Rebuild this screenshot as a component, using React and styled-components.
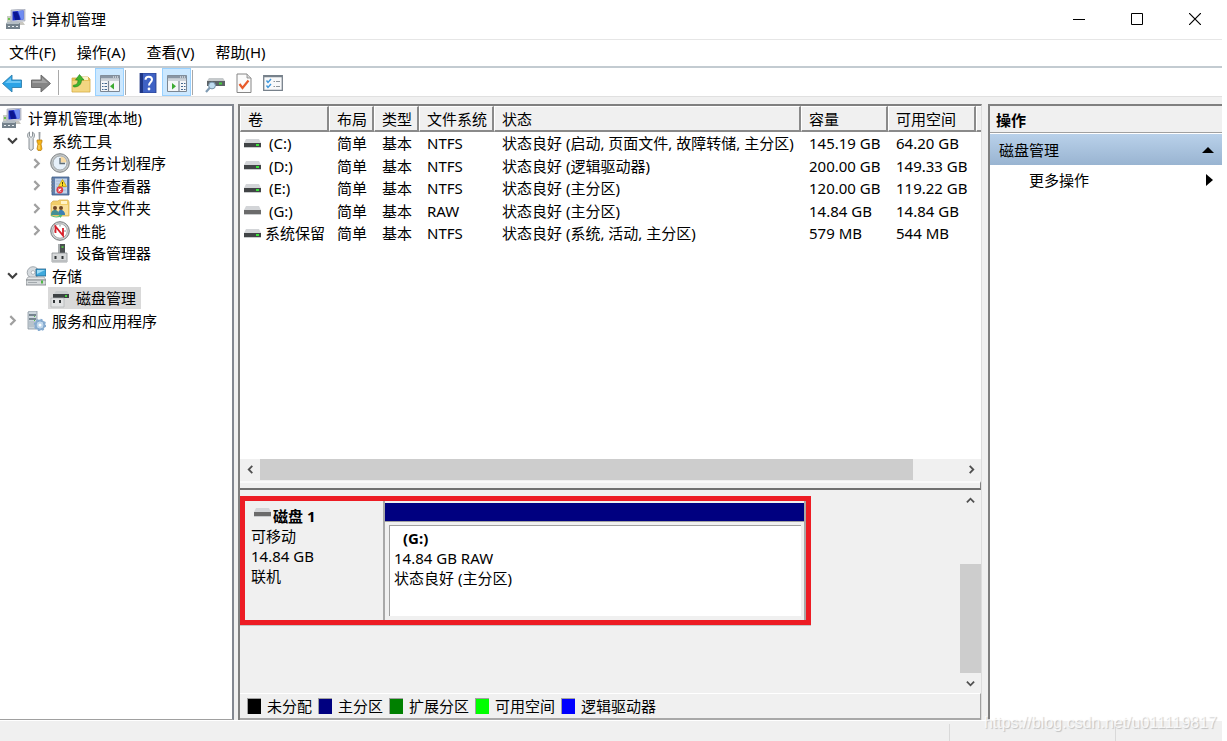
import { createGlobalStyle, styled } from "styled-components";

const menus = ["文件(F)", "操作(A)", "查看(V)", "帮助(H)"];

const tree = [
  { title: "计算机管理(本地)", icon: "computer", level: 0 },
  { title: "系统工具", icon: "tools", level: 1, arrow: "open" },
  { title: "任务计划程序", icon: "clock", level: 2, arrow: "closed" },
  { title: "事件查看器", icon: "events", level: 2, arrow: "closed" },
  { title: "共享文件夹", icon: "shared", level: 2, arrow: "closed" },
  { title: "性能", icon: "performance", level: 2, arrow: "closed" },
  { title: "设备管理器", icon: "device", level: 2 },
  { title: "存储", icon: "storage", level: 1, arrow: "open" },
  { title: "磁盘管理", icon: "disk", level: 2, selected: true },
  { title: "服务和应用程序", icon: "services", level: 1, arrow: "closed" },
];

const columns = [
  { title: "卷", width: 89 },
  { title: "布局", width: 45 },
  { title: "类型", width: 45 },
  { title: "文件系统", width: 75 },
  { title: "状态", width: 307 },
  { title: "容量", width: 87 },
  { title: "可用空间", width: 88 },
];

const volumes = [
  [" (C:)", "简单", "基本", "NTFS", "状态良好 (启动, 页面文件, 故障转储, 主分区)", "145.19 GB", "64.20 GB"],
  [" (D:)", "简单", "基本", "NTFS", "状态良好 (逻辑驱动器)", "200.00 GB", "149.33 GB"],
  [" (E:)", "简单", "基本", "NTFS", "状态良好 (主分区)", "120.00 GB", "119.22 GB"],
  [" (G:)", "简单", "基本", "RAW", "状态良好 (主分区)", "14.84 GB", "14.84 GB"],
  ["系统保留", "简单", "基本", "NTFS", "状态良好 (系统, 活动, 主分区)", "579 MB", "544 MB"],
];

const legends = [
  { title: "未分配", color: "#000" },
  { title: "主分区", color: "#000080" },
  { title: "扩展分区", color: "#008000" },
  { title: "可用空间", color: "#00ff00" },
  { title: "逻辑驱动器", color: "#0000ff" },
];

const icons = {
  computer: (
    <>
      <path d="M1 7h4v7H1z" fill="#c9cdc4" />
      <path d="M2 9h2v2H2z" fill="#6cc04a" />
      <path d="M5 1l14-1v12l-14 1z" fill="#c6cbd6" stroke="#9aa0ae" strokeWidth=".6" />
      <path d="M6.500 2.500l11-1v9l-11 1z" fill="#1c2fd0" />
      <path d="M12 2l5.500-.5v9l-2.500.2z" fill="#6f8cf2" />
      <path d="M7 3l4-.3 2 4 1 4-5 .4z" fill="#0a1690" />
      <path d="M13 13h4l2 3h-5z" fill="#c9c7c0" />
      <path d="M0 14h14v6H0z" fill="#75828c" />
      <path d="M1 13h13l-1 2H0z" fill="#b5bec4" />
      <path d="M2 17h2v1H2zM6 17h2v1H6zM10 17h2v1h-2z" fill="#e9eef0" />
    </>
  ),
  tools: (
    <>
      <path d="M3.500 1v4l1.500 1.500L6.500 5V1c2.500 1.500 2.500 4.500.7 6.500V18L5 19.500 3 18V7.500C1 6 1 2.500 3.500 1z" fill="#dfe2e4" stroke="#7f878c" strokeWidth=".9" />
      <path d="M12.500 1h2l-.3 8h-1.400z" fill="#9ba0a3" />
      <path d="M11 9h5v2l-1 2 1 5-1 1.500h-3L11 18l1-5-1-2z" fill="#f4b41a" stroke="#b87a08" strokeWidth=".7" />
      <path d="M13 14v4" stroke="#ffe38a" strokeWidth="1" />
    </>
  ),
  clock: (
    <>
      <circle cx="10" cy="10" r="9.300" fill="#c5c8c9" stroke="#7d8285" strokeWidth="1" />
      <circle cx="10" cy="10" r="7" fill="#e6f0fa" stroke="#92999d" strokeWidth=".8" />
      <path d="M10.500 9.500V3.500c3.500.3 5.700 2.500 6 6z" fill="#f7d9a2" />
      <path d="M10 5v5.500h5" fill="none" stroke="#5f6d78" strokeWidth="1.300" />
    </>
  ),
  events: (
    <>
      <path d="M2 1h17v18H2z" fill="#5f7fae" stroke="#3e5a87" strokeWidth=".8" />
      <path d="M5 2.500h12v15H5z" fill="#c3d4ea" />
      <path d="M6 5h10M6 8h10M6 11h10M6 14h10" stroke="#9cb2d2" strokeWidth=".8" />
      <path d="M1 3h3M1 6h3M1 9h3M1 12h3M1 15h3" stroke="#7a8591" strokeWidth="1" />
      <path d="M12.500 3.500l4 7h-8z" fill="#ffdf2b" stroke="#c29b00" strokeWidth=".7" />
      <path d="M12.500 6v2.500M12.500 9.200v.8" stroke="#4a3b00" strokeWidth="1" />
      <circle cx="9.800" cy="14" r="3.400" fill="#e13b44" />
      <path d="M8.500 12.700l2.600 2.600M11.100 12.700l-2.600 2.600" stroke="#fff" strokeWidth="1.100" />
    </>
  ),
  shared: (
    <>
      <path d="M1 5l2-2h5l1-1h9l1 2v14H1z" fill="#f2ce69" stroke="#d9b55c" strokeWidth=".8" />
      <path d="M11 3h6v3h-6z" fill="#fff3c7" />
      <path d="M2 7h16v10H2z" fill="#fae09a" />
      <circle cx="5" cy="10" r="2" fill="#6d4626" />
      <circle cx="11" cy="10" r="2" fill="#6d4626" />
      <path d="M8 17c0-4 1-5 3-5s4 1.500 4 5z" fill="#3b7fb4" />
      <path d="M1 17c0-4 2-5 4-5s4 1.500 4 5z" fill="#458f92" />
      <path d="M1 16.500c2 2 5 2.500 8 1.500l-.5-1.500 4 .5-2 3-.5-1c-4 1-7 .5-9-1.500z" fill="#58c070" />
    </>
  ),
  performance: (
    <>
      <circle cx="10" cy="10" r="9.300" fill="#d0d2d3" stroke="#76797b" strokeWidth="1" />
      <circle cx="10" cy="10" r="7.200" fill="#fff" stroke="#8e9294" strokeWidth=".7" />
      <path d="M4 10h2M10 3.500v2M14 10h2" stroke="#6c7072" strokeWidth=".8" />
      <path d="M5.500 12V5.500l7.500 9V7" fill="none" stroke="#d81f2a" strokeWidth="1.800" />
    </>
  ),
  device: (
    <>
      <path d="M9 1h6v10H9z" fill="#4b4f51" />
      <path d="M8 1h2v10H8z" fill="#a9adaf" />
      <path d="M11.500 3h2v2h-2z" fill="#55b948" />
      <path d="M2 10h15v9H2z" fill="#d6d8d9" stroke="#8c9092" strokeWidth=".8" />
      <path d="M4.500 13h2v3h-2zM11.500 13h2v3h-2z" fill="#303437" />
      <path d="M2 17h15v2H2z" fill="#bbbec0" />
    </>
  ),
  storage: (
    <>
      <circle cx="7" cy="6.500" r="5.800" fill="#d6dbdf" stroke="#8f979d" strokeWidth=".8" />
      <circle cx="7" cy="6.500" r="1.800" fill="#fff" stroke="#8f979d" strokeWidth=".6" />
      <path d="M10 3h10v7H10z" fill="#3fa9dc" stroke="#245f88" strokeWidth=".8" />
      <path d="M11 4h8l-8 4z" fill="#9fdcf5" />
      <path d="M2 11h16l2 3H0z" fill="#e6e8e9" stroke="#8a8f93" strokeWidth=".6" />
      <path d="M0 14h20v5H0z" fill="#d6dadc" stroke="#73797d" strokeWidth=".8" />
      <path d="M15 14.500h2v3h-2z" fill="#50b846" />
      <path d="M2 16.500h9" stroke="#a3a9ad" strokeWidth="1" />
    </>
  ),
  disk: (
    <>
      <path d="M6 3h11l2 3H4z" fill="#c9cccd" />
      <path d="M3 6h16v4H3z" fill="#3d4143" />
      <path d="M15 7h2v2h-2z" fill="#45d13d" />
      <path d="M1 10h13v9H1z" fill="#e2e3e4" stroke="#b0b3b5" strokeWidth=".7" />
      <path d="M3 12h2v3H3zM9 12h2v3H9z" fill="#303437" />
    </>
  ),
  services: (
    <>
      <path d="M2 1l2-1h7v18H2z" fill="#cdd6dd" stroke="#8995a0" strokeWidth=".8" />
      <path d="M3 3h7v2H3zM3 7h7v2H3z" fill="#76848f" />
      <path d="M8 5.500h1M8 9.500h1" stroke="#52c04a" strokeWidth="1" />
      <path d="M3 11h7M3 13h7M3 15h7" stroke="#9ba8b3" strokeWidth=".8" />
      <circle cx="14" cy="14" r="4.300" fill="none" stroke="#86abd0" strokeWidth="2.200" />
      <circle cx="14" cy="14" r="5.500" fill="none" stroke="#86abd0" strokeWidth="1.500" strokeDasharray="2 2.300" />
      <circle cx="14" cy="14" r="3.200" fill="#bdd6ec" />
      <circle cx="14" cy="14" r="1.500" fill="#fff" />
    </>
  ),
  back: (
    <>
      <path d="M.5 10.500L10 2v5h9.500v7.500H10V19z" fill="#2ba3e6" stroke="#2f7fae" strokeWidth=".9" />
      <path d="M3 10l6-5.300V8h9.500v2z" fill="#6cc6f5" />
    </>
  ),
  forward: (
    <>
      <path d="M19.500 10.500L10 2v5H.5v7.500H10V19z" fill="#858585" stroke="#666" strokeWidth=".9" />
      <path d="M17 10l-6-5.300V8H1.500v2z" fill="#a3a3a3" />
    </>
  ),
  up: (
    <>
      <path d="M1 5h6l2-1h8l2 2v13H1z" fill="#e8c057" stroke="#d0a848" strokeWidth=".8" />
      <path d="M11 4h6v3h-6z" fill="#fdf3c9" />
      <path d="M1.500 8h17v10.500h-17z" fill="#f3d681" />
      <path d="M3 14c-.8 0-1-1-.5-2 3.500 0 4.500-2 4.500-5H4.500L8.500 1.500 13 7h-2.500c0 4.500-3 7-7.500 7z" fill="#3fb62e" stroke="#24801b" strokeWidth=".6" />
    </>
  ),
  panelLeft: (
    <>
      <path d="M.5 2.500h19v16H.5z" fill="#f4f6f8" stroke="#7b8692" strokeWidth="1" />
      <path d="M.5 2.500h19v3H.5z" fill="#8a96a4" />
      <path d="M13 4h1M15 4h1M17 4h1" stroke="#fff" strokeWidth="1" />
      <path d="M.5 7h19" stroke="#a5afba" strokeWidth="1" />
      <path d="M8.500 8v11" stroke="#7b8692" strokeWidth="1.200" />
      <path d="M2 10.500h1.500M4.500 10.500H7M2 13.500h1.500M4.500 13.500H7M2 16.500h1.500M4.500 16.500H7" stroke="#44688f" strokeWidth="1.200" />
      <path d="M14 10v6.500l-4-3.200z" fill="#3cab32" />
    </>
  ),
  help: (
    <>
      <path d="M2 0h16v20H2z" fill="#3f62c4" stroke="#243b87" strokeWidth=".8" />
      <path d="M2 0h3v20H2z" fill="#1f3786" />
      <path d="M7.500 6.800C7.500 2.500 14 2.800 14 6.500c0 2.800-3 2.800-3 6" fill="none" stroke="#fff" strokeWidth="2" />
      <circle cx="11" cy="16" r="1.400" fill="#fff" />
    </>
  ),
  panelRight: (
    <>
      <path d="M.5 2.500h19v16H.5z" fill="#f4f6f8" stroke="#7b8692" strokeWidth="1" />
      <path d="M.5 2.500h19v3H.5z" fill="#8a96a4" />
      <path d="M13 4h1M15 4h1M17 4h1" stroke="#fff" strokeWidth="1" />
      <path d="M.5 7h19" stroke="#a5afba" strokeWidth="1" />
      <path d="M12 8v11" stroke="#7b8692" strokeWidth="1.200" />
      <path d="M14 10.500h2M17 10.500h1.500M14 13.500h2M17 13.500h1.500M14 16.500h2M17 16.500h1.500" stroke="#44688f" strokeWidth="1.200" />
      <path d="M5 10v6.500l4-3.200z" fill="#3cab32" />
    </>
  ),
  inspect: (
    <>
      <path d="M4 5h14l2 3H2z" fill="#c6cacc" />
      <path d="M2 8h18v5H2z" fill="#5c6266" />
      <path d="M14 9.500h3v2h-3z" fill="#45d13d" />
      <path d="M5 14.500L1 19" stroke="#7f9bb3" strokeWidth="2.200" />
      <circle cx="7" cy="12.500" r="3.400" fill="#bfdcf0" stroke="#7590a5" strokeWidth="1" />
    </>
  ),
  check: (
    <>
      <path d="M3 1h10l4 4v14.500H3z" fill="#fbfbfb" stroke="#868686" strokeWidth="1" />
      <path d="M13 1v4h4" fill="#d9d9d9" stroke="#868686" strokeWidth=".8" />
      <path d="M5.500 11l3 4 6-7.500" fill="none" stroke="#e85a2a" strokeWidth="2.200" />
    </>
  ),
  list: (
    <>
      <path d="M.7 2.700h18.600v14.600H.7z" fill="#f8f9fa" stroke="#77818b" strokeWidth="1.300" />
      <path d="M1 3.500h18" stroke="#77818b" strokeWidth="1.500" />
      <path d="M3.500 7.500l1.500 2 3-3.500M3.500 12.500l1.500 2 3-3.500" fill="none" stroke="#3f97dc" strokeWidth="1.400" />
      <path d="M10.500 8.500H12M13 8.500h4M10.500 13.500H12M13 13.500h4" stroke="#8d959c" strokeWidth="1.200" />
    </>
  ),
};

const Icon = ({ name, size = 20 }) => (
  <StIcon viewBox="0 0 20 20" width={size} height={size} aria-hidden="true">
    {icons[name]}
  </StIcon>
);

const Drive = ({ off }) => (
  <StIcon viewBox="0 0 17 9" width="17" height="9" aria-hidden="true">
    <path d="M2 0h13l2 4H0z" fill="#d3d5d8" />
    <path d="M0 4h17v4H0z" fill={off ? "#6b6b6b" : "#414446"} />
    <path d="M0 8h17v1H0z" fill="#c9cbcd" />
    {!off && <path d="M12 5h3v2h-3z" fill="#3be03b" />}
  </StIcon>
);

const arrows = {
  left: "M7 1L3 5l4 4",
  right: "M3 1l4 4-4 4",
  up: "M1 7l4-4 4 4",
  down: "M1 3l4 4 4-4",
};

const Chevron = ({ to, size = 9, color = "#505050" }) => (
  <StIcon viewBox="0 0 10 10" width={size} height={size} aria-hidden="true">
    <path d={arrows[to]} fill="none" stroke={color} strokeWidth="2" />
  </StIcon>
);

const Tool = ({ name, label, active }) => (
  <ToolButton $active={active} aria-label={label}>
    <Icon name={name} />
  </ToolButton>
);

const TitleBar = () => (
  <StTitleBar>
    <Icon name="computer" />
    <h1>计算机管理</h1>
    <WindowButton aria-label="最小化">
      <svg width="12" height="12">
        <path d="M0 6.500h12" stroke="#000" />
      </svg>
    </WindowButton>
    <WindowButton aria-label="最大化">
      <svg width="12" height="12">
        <path d="M.5.5h11v11H.5z" fill="none" stroke="#000" />
      </svg>
    </WindowButton>
    <WindowButton aria-label="关闭">
      <svg width="12" height="12">
        <path d="M0 0l12 12M12 0L0 12" stroke="#000" strokeWidth="1.200" />
      </svg>
    </WindowButton>
  </StTitleBar>
);

const ToolBar = () => (
  <StToolBar>
    <ToolNav>
      <Tool name="back" label="后退" />
      <Tool name="forward" label="前进" />
    </ToolNav>
    <ToolLine />
    <Tool name="up" label="上一级" />
    <Tool name="panelLeft" label="显示/隐藏控制台树" active />
    <ToolLine />
    <Tool name="help" label="帮助" />
    <Tool name="panelRight" label="显示/隐藏操作窗格" active />
    <ToolLine />
    <Tool name="inspect" label="查看磁盘" />
    <Tool name="check" label="属性" />
    <Tool name="list" label="设置" />
  </StToolBar>
);

const Tree = () => (
  <StTree>
    {tree.map((item) => (
      <TreeRow key={item.title} $level={item.level}>
        {item.level > 0 && (
          <TreeArrow>
            {item.arrow && (
              <button aria-label={item.arrow === "open" ? "折叠" : "展开"}>
                <Chevron
                  to={item.arrow === "open" ? "down" : "right"}
                  size={11}
                  color={item.arrow === "open" ? "#404040" : "#a0a0a0"}
                />
              </button>
            )}
          </TreeArrow>
        )}
        <TreeLabel $selected={item.selected}>
          <Icon name={item.icon} />
          {item.title}
        </TreeLabel>
      </TreeRow>
    ))}
  </StTree>
);

const VolumeTable = () => (
  <StVolumeTable>
    <colgroup>
      {columns.map((column) => (
        <VolumeCol key={column.title} $width={column.width} />
      ))}
      <col />
    </colgroup>
    <thead>
      <tr>
        {columns.map((column) => (
          <th key={column.title}>{column.title}</th>
        ))}
        <th />
      </tr>
    </thead>
    <tbody>
      {volumes.map(([name, ...cells]) => (
        <tr key={name}>
          <td>
            <VolumeName>
              <Drive off={cells[2] === "RAW"} />
              {name}
            </VolumeName>
          </td>
          {cells.map((cell, i) => (
            <td key={i}>{cell}</td>
          ))}
        </tr>
      ))}
    </tbody>
  </StVolumeTable>
);

const DiskView = () => (
  <StDiskView>
    <DiskArea>
      <DiskRow>
        <DiskInfo>
          <h2>
            <Drive off />
            磁盘 1
          </h2>
          <p>可移动</p>
          <p>14.84 GB</p>
          <p>联机</p>
        </DiskInfo>
        <Partition>
          <PartitionBar />
          <PartitionBox>
            <h3>(G:)</h3>
            <p>14.84 GB RAW</p>
            <p>状态良好 (主分区)</p>
          </PartitionBox>
        </Partition>
      </DiskRow>
    </DiskArea>
    <ScrollColumn>
      <ScrollButton aria-label="向上滚动">
        <Chevron to="up" />
      </ScrollButton>
      <ScrollSpace $grow={54} />
      <ScrollThumb $grow={108} />
      <ScrollButton aria-label="向下滚动">
        <Chevron to="down" />
      </ScrollButton>
    </ScrollColumn>
  </StDiskView>
);

const App = () => {
  return (
    <>
      <GlobalStyle />
      <Window>
        <TitleBar />
        <MenuBar>
          {menus.map((menu) => (
            <button key={menu}>{menu}</button>
          ))}
        </MenuBar>
        <ToolBar />
        <Content>
          <Tree />
          <Center>
            <VolumeList>
              <VolumeTable />
            </VolumeList>
            <ScrollRow>
              <ScrollButton aria-label="向左滚动">
                <Chevron to="left" />
              </ScrollButton>
              <ScrollThumb $grow={650} />
              <ScrollSpace $grow={48} />
              <ScrollButton aria-label="向右滚动">
                <Chevron to="right" />
              </ScrollButton>
            </ScrollRow>
            <Splitter />
            <DiskView />
            <Legend>
              {legends.map((legend) => (
                <li key={legend.title}>
                  <Swatch $color={legend.color} />
                  {legend.title}
                </li>
              ))}
            </Legend>
          </Center>
          <Actions>
            <h2>操作</h2>
            <ActionGroup>
              磁盘管理
              <svg width="12" height="6" aria-hidden="true">
                <path d="M0 6l6-6 6 6z" />
              </svg>
            </ActionGroup>
            <ActionItem>
              更多操作
              <svg width="7" height="12" aria-hidden="true">
                <path d="M0 0l7 6-7 6z" />
              </svg>
            </ActionItem>
          </Actions>
        </Content>
        <StatusBar>
          <StatusCell />
          <StatusCell $width={166} />
          <StatusCell $width={106} />
          <Watermark>https://blog.csdn.net/u011119817</Watermark>
        </StatusBar>
      </Window>
    </>
  );
};

const GlobalStyle = createGlobalStyle`
  * {
    box-sizing: border-box;
  }

  body {
    margin: 0;
    background: #fff;
    font-family: "Noto Sans", "Noto Sans CJK SC", sans-serif;
    font-size: 15px;
    line-height: 20px;
    color: #000;
  }

  h1, h2, h3, p, ul {
    margin: 0;
    padding: 0;
    font-size: 15px;
  }

  ul {
    list-style: none;
  }

  button {
    padding: 0;
    border: none;
    background: none;
    font: inherit;
    color: inherit;
    display: flex;
    align-items: center;
  }
`;

const StIcon = styled.svg`
  display: block;
  flex-shrink: 0;
`;

const Window = styled.div`
  min-height: 100vh;
  margin-right: 5px;
  background: #f0f0f0;
  display: flex;
  flex-direction: column;
`;

const StTitleBar = styled.header`
  height: 40px;
  padding: 0 0 2px 6px;
  border-bottom: 1px solid #e6e6e6;
  background: #fff;
  display: flex;
  align-items: center;

  h1 {
    flex: 1;
    padding-left: 5px;
    font-weight: 400;
  }
`;

const WindowButton = styled.button`
  width: 58px;
  height: 37px;
  padding-left: 3px;
  justify-content: center;
`;

const MenuBar = styled.nav`
  height: 28px;
  padding: 0 9px 2px;
  border-bottom: 2px solid #c3cbd1;
  background: #fff;
  display: flex;
  align-items: center;
  gap: 21px;
`;

const StToolBar = styled.div`
  height: 29px;
  border-bottom: 1px solid #e0e0e0;
  background: #fff;
  display: flex;
  align-items: center;
`;

const ToolButton = styled.button`
  width: 29px;
  height: 28px;
  padding-top: 1px;
  justify-content: center;
  border: 1px solid ${({ $active }) => ($active ? "#99d1ff" : "transparent")};
  background: ${({ $active }) => ($active ? "#cce8ff" : "none")};
`;

const ToolNav = styled.div`
  margin-right: 4px;
  display: flex;
  gap: 5px;

  button {
    width: 24px;
  }
`;

const ToolLine = styled.span`
  width: 1px;
  height: 25px;
  margin: 0 7px 0 1px;
  background: #a9a9a9;
`;

const Content = styled.main`
  flex: 1;
  padding-top: 7px;
  display: grid;
  grid-template-columns: 234px minmax(0, 1fr) 234px;
`;

const StTree = styled.ul`
  padding-top: 1px;
  border-top: 2px solid #828790;
  border-right: 2px solid #828790;
  border-bottom: 1px solid #a0a0a0;
  background: #fff;
`;

const TreeRow = styled.li`
  height: 22px;
  padding-left: ${({ $level }) => ($level > 1 ? 24 : 0)}px;
  display: flex;

  &:nth-child(even) {
    height: 23px;
  }
`;

const TreeArrow = styled.span`
  width: 24px;
  display: flex;
  justify-content: center;
`;

const TreeLabel = styled.button`
  padding: 0 5px 0 2px;
  background: ${({ $selected }) => ($selected ? "#d9d9d9" : "none")};
  gap: 6px;
`;

const Center = styled.section`
  margin: 0 6px 0 4px;
  border-top: 2px solid #808080;
  border-left: 2px solid #808080;
  border-right: 1px solid #dcdcdc;
  display: flex;
  flex-direction: column;
`;

const VolumeList = styled.div`
  flex: 1;
  background: #fff;
  overflow: hidden;
`;

const StVolumeTable = styled.table`
  width: 100%;
  border-collapse: separate;
  border-spacing: 0;
  table-layout: fixed;
  white-space: nowrap;

  th {
    height: 26px;
    padding: 0 7px;
    border-top: 1px solid #fff;
    border-left: 1px solid #fff;
    border-right: 2px solid #8a8a8a;
    border-bottom: 2px solid #8a8a8a;
    background: #f0f0f0;
    font-weight: 400;
    text-align: left;
  }

  th:last-child {
    padding: 0;
    border-right: none;
  }

  td {
    height: 22px;
    padding: 0 0 0 8px;
  }

  td:first-child {
    padding-left: 4px;
  }

  tr:nth-child(even) td {
    height: 23px;
  }
`;

const VolumeCol = styled.col`
  width: ${({ $width }) => $width}px;
`;

const VolumeName = styled.span`
  display: flex;
  align-items: center;
  gap: 4px;
  white-space: pre;
`;

const ScrollRow = styled.div`
  height: 22px;
  padding-bottom: 1px;
  display: flex;
`;

const ScrollColumn = styled.div`
  width: 21px;
  display: flex;
  flex-direction: column;
`;

const ScrollButton = styled.button`
  width: 20px;
  height: 20px;
  justify-content: center;
`;

const ScrollThumb = styled.div`
  flex: ${({ $grow }) => $grow} 1 0;
  background: #cdcdcd;
`;

const ScrollSpace = styled.div`
  flex: ${({ $grow }) => $grow} 1 0;
`;

const Splitter = styled.div`
  height: 9px;
  border-top: 2px solid #fafafa;
  border-right: 1px solid #808080;
  border-bottom: 2px solid #707070;
`;

const StDiskView = styled.div`
  height: 203px;
  display: flex;
`;

const DiskArea = styled.div`
  flex: 1;
  padding-top: 6px;
`;

const DiskRow = styled.article`
  max-width: 571px;
  height: 129px;
  border: 5px solid #ed1c24;
  box-shadow: 0 1px 0 #c4c4c4;
  display: flex;
`;

const DiskInfo = styled.div`
  width: 140px;
  padding: 5px 6px;
  border-right: 2px solid #a8a8a8;

  h2 {
    padding-left: 3px;
    display: flex;
    gap: 2px;
  }

  svg {
    margin-top: 2px;
  }
`;

const Partition = styled.div`
  flex: 1;
  padding: 2px 0 4px;
  border-right: 2px solid #a8a8a8;
  display: flex;
  flex-direction: column;
`;

const PartitionBar = styled.div`
  height: 19px;
  border-bottom: 1px solid #a0a0a0;
  background: #000080;
`;

const PartitionBox = styled.div`
  flex: 1;
  margin: 3px 3px 0 4px;
  padding: 2px 4px;
  border-top: 1px solid #a0a0a0;
  border-left: 1px solid #a0a0a0;
  background: #fff;

  h3 {
    padding-left: 9px;
  }
`;

const Legend = styled.ul`
  height: 27px;
  padding-left: 7px;
  border-top: 1px solid #fff;
  border-right: 1px solid #a0a0a0;
  border-bottom: 2px solid #a8a8a8;
  display: flex;
  align-items: center;
  gap: 6px;

  li {
    display: flex;
    align-items: center;
    gap: 6px;
  }
`;

const Swatch = styled.span`
  width: 14px;
  height: 16px;
  border-top: 1px solid #a0a0a0;
  border-left: 1px solid #a0a0a0;
  background: ${({ $color }) => $color};
`;

const Actions = styled.aside`
  border-top: 2px solid #808080;
  border-left: 2px solid #808080;
  background: #fff;

  h2 {
    height: 27px;
    padding: 4px 6px 0;
    border-bottom: 1px solid #a0a0a0;
    background: #f0f0f0;
  }
`;

const ActionGroup = styled.button`
  width: 100%;
  height: 31px;
  margin-top: 1px;
  padding: 0 8px 0 9px;
  justify-content: space-between;
  background: linear-gradient(#b9d1ea, #99b4d1);
`;

const ActionItem = styled.button`
  width: 100%;
  height: 29px;
  padding: 0 9px 0 39px;
  justify-content: space-between;
`;

const StatusBar = styled.footer`
  position: relative;
  height: 21px;
  border-top: 1px solid #fff;
  display: flex;
`;

const StatusCell = styled.span`
  flex: ${({ $width }) => ($width ? `0 0 ${$width}px` : 1)};
  margin-top: 3px;
  border-right: 1px solid #d9d9d9;

  &:nth-child(3) {
    border-right: none;
  }
`;

const Watermark = styled.span`
  position: absolute;
  right: 5px;
  bottom: 8px;
  font-family: "Liberation Sans", sans-serif;
  font-size: 16px;
  color: rgba(255, 255, 255, 0.8);
  text-shadow: 1px 1px 1px rgba(0, 0, 0, 0.2);
`;

export default App;
